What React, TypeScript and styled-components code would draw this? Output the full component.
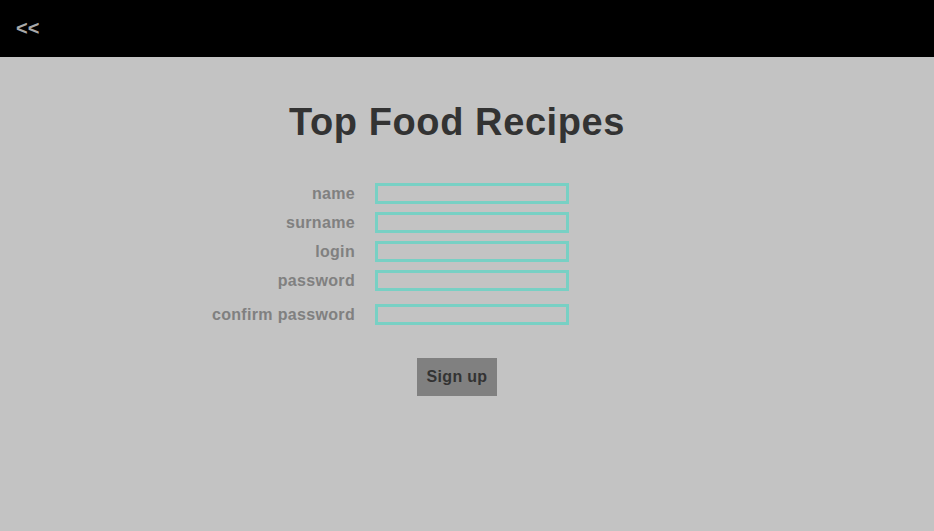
import React from "react";
import styled, { createGlobalStyle } from "styled-components";

const GlobalStyle = createGlobalStyle`
  html, body {
    margin: 0;
    padding: 0;
    background: #c3c3c3;
    font-family: "Liberation Sans", Arial, sans-serif;
  }
`;

const Page = styled.div`
  min-height: 531px;
  display: flex;
  flex-direction: column;
`;

const TopBar = styled.header`
  height: 57px;
  background: #000000;
  display: flex;
  align-items: center;
  padding-left: 16px;
`;

const BackButton = styled.button`
  background: none;
  border: none;
  padding: 0;
  color: #a9a9a9;
  font-family: inherit;
  font-weight: bold;
  font-size: 20px;
  cursor: pointer;
`;

const Main = styled.main`
  display: flex;
  flex-direction: column;
  align-items: center;
  padding-right: 20px;
`;

const Title = styled.h1`
  margin: 44px 0 39px;
  font-size: 38px;
  letter-spacing: 0.6px;
  font-weight: bold;
  color: #333333;
`;

const Form = styled.form`
  display: flex;
  flex-direction: column;
  align-items: center;
  width: 100%;
`;

const Fields = styled.div`
  display: grid;
  grid-template-columns: 1fr 194px 1fr;
  column-gap: 20px;
  row-gap: 8px;
  width: 100%;
  padding-left: 30px;
  box-sizing: border-box;
`;

const Label = styled.label<{ $gap?: number }>`
  grid-column: 1;
  justify-self: end;
  align-self: center;
  margin-top: ${(p) => p.$gap ?? 0}px;
  color: #808080;
  font-weight: bold;
  font-size: 16px;
  letter-spacing: 0.33px;
`;

const Input = styled.input<{ $gap?: number }>`
  grid-column: 2;
  box-sizing: border-box;
  width: 194px;
  height: 21px;
  margin-top: ${(p) => p.$gap ?? 0}px;
  border: 3px solid #78d0c4;
  background: transparent;
  outline: none;
`;

const SubmitButton = styled.button`
  margin-top: 33px;
  width: 80px;
  height: 38px;
  border: none;
  background: #808080;
  color: #333333;
  font-family: inherit;
  font-weight: bold;
  font-size: 16px;
  letter-spacing: 0.3px;
  cursor: pointer;
`;

const fields = [
  { id: "name", label: "name", type: "text", gap: 0 },
  { id: "surname", label: "surname", type: "text", gap: 0 },
  { id: "login", label: "login", type: "text", gap: 0 },
  { id: "password", label: "password", type: "password", gap: 0 },
  { id: "confirm", label: "confirm password", type: "password", gap: 5 },
];

export default function App() {
  return (
    <Page>
      <GlobalStyle />
      <TopBar>
        <BackButton>&lt;&lt;</BackButton>
      </TopBar>
      <Main>
        <Title>Top Food Recipes</Title>
        <Form onSubmit={(ev) => ev.preventDefault()}>
          <Fields>
            {fields.map((f) => (
              <React.Fragment key={f.id}>
                <Label htmlFor={f.id} $gap={f.gap}>
                  {f.label}
                </Label>
                <Input id={f.id} type={f.type} $gap={f.gap} />
              </React.Fragment>
            ))}
          </Fields>
          <SubmitButton type="submit">Sign up</SubmitButton>
        </Form>
      </Main>
    </Page>
  );
}
